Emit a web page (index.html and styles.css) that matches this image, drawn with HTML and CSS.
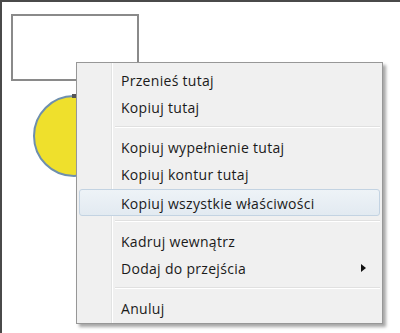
FILE: index.html
```html
<!DOCTYPE html>
<html lang="pl">
<head>
    <meta charset="UTF-8">
    <title>Menu kontekstowe</title>
    <link rel="stylesheet" href="styles.css">
</head>

<body>
    <div class="stage">
        <!-- shapes on the drawing canvas -->
        <svg class="shapes" width="400" height="333" viewBox="0 0 400 333">
            <rect x="12" y="15" width="126" height="65" fill="#fff" stroke="#8a8a8a" stroke-width="2"/>
            <circle cx="74" cy="136" r="40" fill="#efe02c" stroke="#6e8fae" stroke-width="2"/>
            <rect x="72" y="94" width="5" height="4" fill="#555"/>
        </svg>

        <div class="menu">
            <div class="item">Przenieś tutaj</div>
            <div class="item">Kopiuj tutaj</div>
            <div class="sep"></div>
            <div class="item">Kopiuj wypełnienie tutaj</div>
            <div class="item">Kopiuj kontur tutaj</div>
            <div class="item active">Kopiuj wszystkie właściwości</div>
            <div class="sep"></div>
            <div class="item">Kadruj wewnątrz</div>
            <div class="item has-sub">Dodaj do przejścia</div>
            <div class="sep"></div>
            <div class="item">Anuluj</div>
        </div>
    </div>
</body>

</html>
```

FILE: styles.css
```css
body {
    margin: 0;
    background: #fff;
    font-family: "Open Sans", "Noto Sans", sans-serif;
}

.stage {
    position: relative;
    width: 400px;
    height: 333px;
    box-sizing: border-box;
    border-top: 2px solid #4a4a4a;
    border-left: 2px solid #4a4a4a;
    overflow: hidden;
}

.shapes {
    position: absolute;
    left: -2px;
    top: -2px;
}

.menu {
    position: absolute;
    left: 74px;
    top: 60px;
    width: 301px;
    padding: 3px 2px 2px 2px;
    background: #f0f0f0;
    border: 1px solid #979797;
    box-shadow: 3px 3px 3px rgba(0, 0, 0, 0.35);
    /* gutter line on the left */
    background-image: linear-gradient(to right, transparent 34px, #e2e3e3 34px, #e2e3e3 35px, #fff 35px, #fff 36px, transparent 36px);
}

.item {
    position: relative;
    height: 27px;
    line-height: 27px;
    padding-left: 41px;
    font-size: 14px;
    color: #1a1a1a;
    letter-spacing: 0.3px;
    border: 1px solid transparent;
    box-sizing: border-box;
    border-radius: 3px;
}

.item.active {
    margin: 2px 0 -2px;
    background: linear-gradient(#eef3f7, #e2eaf1);
    border-color: #c3d3e2;
}

.item.has-sub::after {
    content: "";
    position: absolute;
    right: 13px;
    top: 9px;
    border-left: 5px solid #111;
    border-top: 4px solid transparent;
    border-bottom: 4px solid transparent;
}

.sep {
    height: 13px;
    margin-left: 36px;
    background: linear-gradient(transparent 6px, #e0e0e0 6px, #e0e0e0 7px, #fff 7px, #fff 8px, transparent 8px);
}
```
